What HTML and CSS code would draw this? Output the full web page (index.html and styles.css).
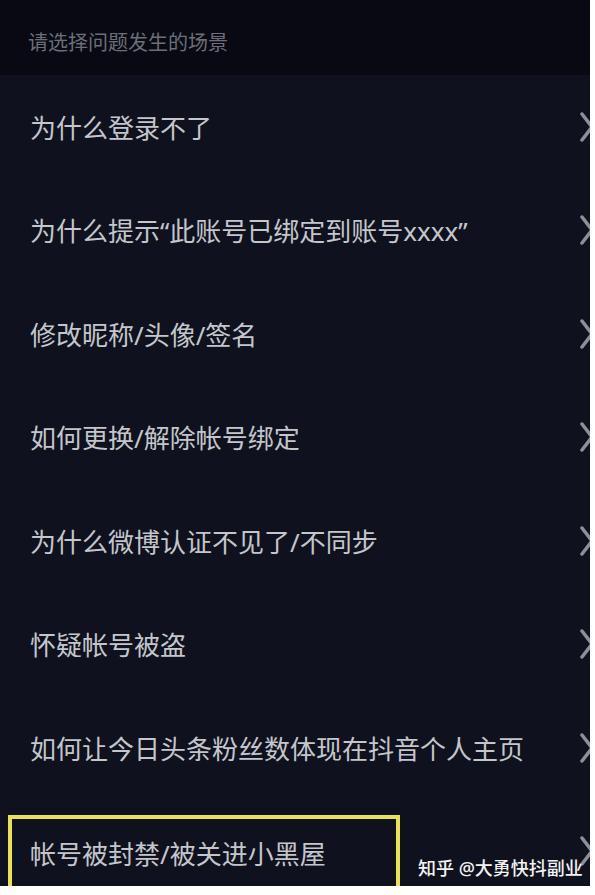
FILE: index.html
```html
<!DOCTYPE html>
<html lang="zh-CN">
<head>
<meta charset="utf-8">
<title>请选择问题发生的场景</title>
<link rel="stylesheet" href="styles.css">
</head>
<body>
<div class="screen">
  <header class="topbar">
    <span class="topbar-title">请选择问题发生的场景</span>
  </header>
  <ul class="menu">
    <li class="menu-row"><span class="menu-label">为什么登录不了</span><svg class="chev" viewBox="0 0 14 30"><polyline points="2,2 12,15 2,28"/></svg></li>
    <li class="menu-row"><span class="menu-label">为什么提示“此账号已绑定到账号xxxx”</span><svg class="chev" viewBox="0 0 14 30"><polyline points="2,2 12,15 2,28"/></svg></li>
    <li class="menu-row"><span class="menu-label">修改昵称/头像/签名</span><svg class="chev" viewBox="0 0 14 30"><polyline points="2,2 12,15 2,28"/></svg></li>
    <li class="menu-row"><span class="menu-label">如何更换/解除帐号绑定</span><svg class="chev" viewBox="0 0 14 30"><polyline points="2,2 12,15 2,28"/></svg></li>
    <li class="menu-row"><span class="menu-label">为什么微博认证不见了/不同步</span><svg class="chev" viewBox="0 0 14 30"><polyline points="2,2 12,15 2,28"/></svg></li>
    <li class="menu-row"><span class="menu-label">怀疑帐号被盗</span><svg class="chev" viewBox="0 0 14 30"><polyline points="2,2 12,15 2,28"/></svg></li>
    <li class="menu-row"><span class="menu-label">如何让今日头条粉丝数体现在抖音个人主页</span><svg class="chev" viewBox="0 0 14 30"><polyline points="2,2 12,15 2,28"/></svg></li>
    <li class="menu-row"><span class="menu-label highlight">帐号被封禁/被关进小黑屋</span><svg class="chev" viewBox="0 0 14 30"><polyline points="2,2 12,15 2,28"/></svg></li>
  </ul>
  <div class="credit">知乎 @大勇快抖副业</div>
</div>
</body>
</html>
```
FILE: styles.css
```css
html, body {
  margin: 0;
  padding: 0;
  background: #ffffff;
}

.screen {
  position: relative;
  width: 590px;
  height: 886px;
  overflow: hidden;
  background: #0f121e;
  font-family: "Noto Sans", "Noto Sans CJK SC", sans-serif;
}

.topbar {
  height: 75px;
  display: flex;
  align-items: center;
  padding-left: 28px;
  background: #080912;
  box-sizing: border-box;
}

.topbar-title {
  font-size: 20px;
  color: #6c6f79;
  padding-top: 8px;
}

.menu {
  list-style: none;
  margin: 0;
  padding: 0;
}

.menu-row {
  height: 103.5px;
  display: flex;
  align-items: center;
  padding-left: 30px;
  box-sizing: border-box;
}

.menu-label {
  font-size: 26px;
  color: #c4c6cc;
  white-space: nowrap;
}

/* framed entry: the box bleeds past the bottom edge of the screen */
.menu-label.highlight {
  margin-left: -22px;
  width: 392px;
  height: 76px;
  box-sizing: border-box;
  border: 4px solid #e9e34c;
  padding-left: 18px;
  display: flex;
  align-items: center;
  margin-top: 3px;
}

.chev {
  width: 14px;
  height: 30px;
  margin-left: auto;
  margin-right: -4px;
  flex-shrink: 0;
}

.chev polyline {
  fill: none;
  stroke: #8e9098;
  stroke-width: 3.5;
  stroke-linecap: round;
  stroke-linejoin: round;
}

.credit {
  position: absolute;
  left: 418px;
  top: 855px;
  font-size: 18px;
  line-height: 26px;
  color: #f2f2f2;
  font-weight: 500;
  white-space: nowrap;
}
```
